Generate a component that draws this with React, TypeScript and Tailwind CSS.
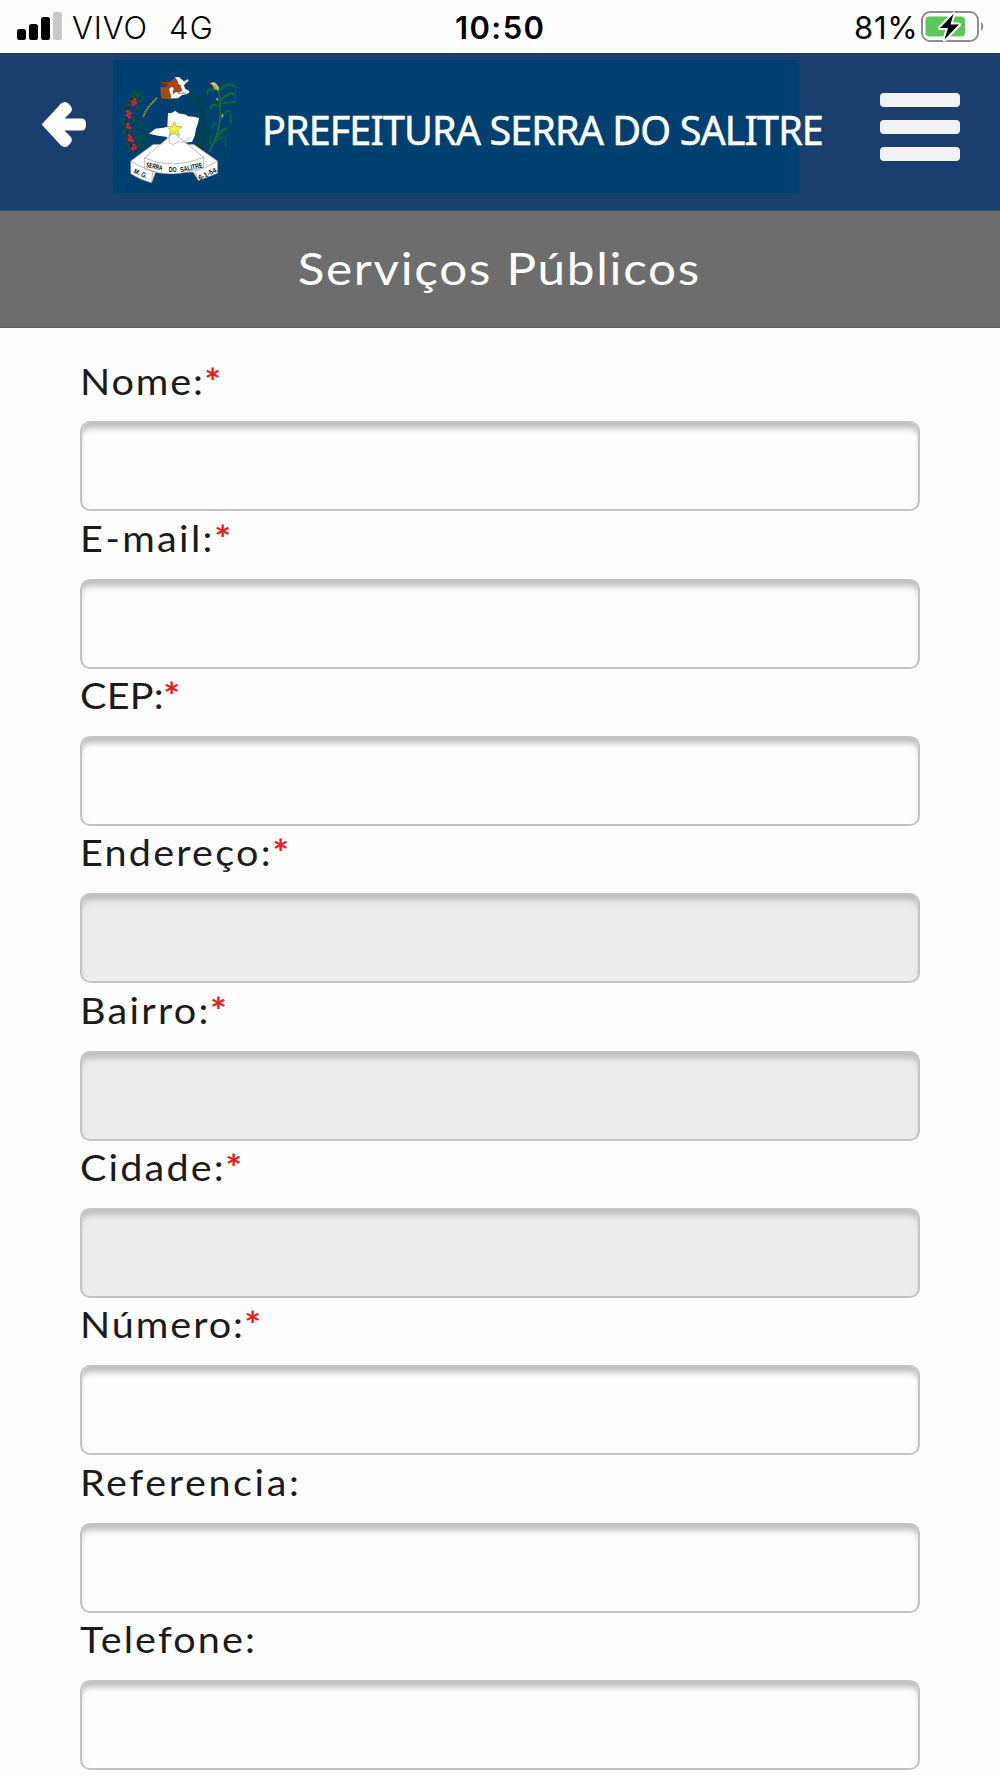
import type { ReactNode } from 'react';

interface Field {
  id: string;
  label: string;
  tracking: string;
  required?: boolean;
  disabled?: boolean;
}

const fields: Field[] = [
  { id: 'nome', label: 'Nome:', tracking: 'tracking-[1.7px]', required: true },
  { id: 'email', label: 'E-mail:', tracking: 'tracking-[2.1px]', required: true },
  { id: 'cep', label: 'CEP:', tracking: 'tracking-[0.2px]', required: true },
  { id: 'endereco', label: 'Endereço:', tracking: 'tracking-[2px]', required: true, disabled: true },
  { id: 'bairro', label: 'Bairro:', tracking: 'tracking-[2.05px]', required: true, disabled: true },
  { id: 'cidade', label: 'Cidade:', tracking: 'tracking-[1.95px]', required: true, disabled: true },
  { id: 'numero', label: 'Número:', tracking: 'tracking-[1.75px]', required: true },
  { id: 'referencia', label: 'Referencia:', tracking: 'tracking-[2.35px]' },
  { id: 'telefone', label: 'Telefone:', tracking: 'tracking-[1.9px]' },
];

function SignalIcon() {
  return (
    <svg className="h-[30px] w-[46px]" viewBox="0 0 46 30">
      <rect x="0" y="18" width="9" height="11" rx="2.5" />
      <rect x="12" y="13" width="9" height="16" rx="2.5" />
      <rect x="24" y="6" width="9" height="23" rx="2.5" />
      <rect x="36" y="1" width="9" height="28" rx="2.5" fill="#c8c8c8" />
    </svg>
  );
}

function BatteryIcon() {
  return (
    <svg className="h-[34px] w-[66px]" viewBox="0 0 66 34">
      <rect x="2" y="1" width="56" height="29" rx="8" fill="#fff" stroke="#8e8e90" strokeWidth="2" />
      <rect x="5.5" y="5.5" width="39.5" height="20" rx="4" fill="#5ac85a" />
      <path d="M61 11c3 1.500 3 7.500 0 9z" fill="#8e8e90" />
      <path
        d="M33.500 3 20 17h8l-3.500 11.500L39 13.500h-8.500z"
        fill="#000"
        stroke="#fff"
        strokeWidth="4"
        strokeLinejoin="round"
        paintOrder="stroke"
      />
    </svg>
  );
}

function StatusBar() {
  return (
    <div className="flex h-[53px] items-start pt-[11px] pl-[17px] font-['Inter',sans-serif] text-[31px] leading-[33px] text-black">
      <SignalIcon />
      <span className="ml-[9px] w-[97px] font-light tracking-[0.9px]">VIVO</span>
      <span className="w-[286px] font-light tracking-[1.2px]">4G</span>
      <span className="w-[399px] font-semibold tracking-[1.4px]">10:50</span>
      <span className="w-[66px] tracking-[0.7px]">81%</span>
      <BatteryIcon />
    </div>
  );
}

function Leaves({ points, fill }: { points: number[][]; fill: string }) {
  return (
    <g fill={fill}>
      {points.map(([x, y, angle, size]) => (
        <path
          key={`${x}-${y}-${angle}`}
          d="M0 0C4-5 12-5 17 0 11 4 5 4 0 0z"
          transform={`translate(${x} ${y}) rotate(${angle}) scale(${size})`}
        />
      ))}
    </g>
  );
}

// Coffee branch, wheat, map with star, corn stalk and ribbon
function CityEmblem() {
  return (
    <svg className="h-[133px] w-[137px] shrink-0" viewBox="9 0 411 399">
      <path d="M72 102Q40 160 50 215T84 272" fill="none" stroke="#07371f" strokeWidth="4" />
      <Leaves
        fill="#0b5a2c"
        points={[
          [74, 110, -90, 1.2], [76, 112, -35, 1.5], [72, 112, -145, 1.1], [68, 122, 185, 0.9], [80, 122, 10, 1.1],
          [62, 136, 200, 1], [78, 138, 40, 0.9], [54, 156, 205, 1], [50, 174, 160, 0.9], [62, 172, 20, 1],
          [48, 192, 200, 0.9], [60, 188, -10, 0.9], [50, 212, 165, 1.1], [66, 212, 25, 0.8], [54, 232, 170, 0.9],
          [70, 238, -30, 1], [58, 252, 150, 0.9], [70, 262, 130, 0.9], [80, 262, -40, 1], [84, 270, 100, 0.7],
        ]}
      />
      <g fill="#c92c36" stroke="#7d1820" strokeWidth="1">
        {[
          [74, 119], [69, 126], [76, 129], [70, 134], [54, 155], [60, 160], [52, 166], [58, 171], [54, 193],
          [52, 201], [59, 204], [57, 227], [62, 233], [58, 239], [66, 242], [72, 257], [76, 264], [69, 266],
        ].map(([x, y]) => (
          <circle key={`${x}-${y}`} cx={x} cy={y} r="5.500" />
        ))}
      </g>

      <path d="M132 118Q92 165 94 215T112 262" fill="none" stroke="#0a4a2a" strokeWidth="2" />
      <Leaves
        fill="#0a4f2e"
        points={[
          [98, 176, -60, 0.9], [94, 186, 200, 0.9], [98, 192, -20, 0.9], [93, 202, 170, 0.9], [96, 208, -40, 1],
          [94, 218, 190, 1], [98, 224, 10, 0.9], [96, 234, 160, 1], [102, 240, -50, 0.9], [100, 250, 150, 0.9],
          [106, 254, -20, 0.8], [108, 262, 120, 0.8], [92, 192, 110, 0.7], [98, 228, 100, 0.8],
        ]}
      />
      <path d="M141 113 128 128M130 126Q108 145 100 170" fill="none" stroke="#8b8b36" strokeWidth="6" strokeDasharray="5 2" />
      <path d="M140 114Q110 140 100 172" fill="none" stroke="#c6b544" strokeWidth="2" strokeDasharray="3 4" />

      <path d="M252 104Q282 150 282 205T262 262" fill="none" stroke="#073f25" strokeWidth="2.500" />
      <Leaves
        fill="#07482a"
        points={[
          [250, 108, -100, 0.9], [256, 114, 200, 0.8], [258, 118, -40, 1], [262, 128, 180, 0.9], [266, 132, -30, 1],
          [270, 142, 170, 1], [272, 148, -20, 1.1], [274, 158, 190, 0.8], [278, 166, -40, 1], [279, 176, 160, 1],
          [281, 184, -10, 0.9], [282, 196, 190, 1], [282, 204, 20, 1], [282, 214, 160, 1.2], [278, 226, -20, 1.1],
          [276, 234, 180, 1], [272, 244, 10, 1.1], [270, 252, 160, 1.1], [262, 262, -20, 1], [290, 210, 60, 1],
          [266, 226, 120, 0.8], [284, 234, 50, 0.9],
        ]}
      />

      <path d="M298 276Q330 218 331 160T322 82" fill="none" stroke="#24743a" strokeWidth="4" />
      <g fill="none" stroke="#0d6a34" strokeLinecap="round" strokeWidth="7">
        <path d="M323 90Q296 82 291 98" />
        <path d="M325 96Q348 62 375 80" />
        <path d="M330 122Q360 92 374 104" />
        <path d="M331 132Q352 126 376 126" strokeWidth="4" />
        <path d="M330 140Q306 126 302 145" />
        <path d="M332 180Q350 144 360 155L363 188" strokeWidth="4" />
        <path d="M329 200Q308 180 307 205" strokeWidth="4" />
        <path d="M320 232Q340 204 350 205" />
        <path d="M313 248Q335 224 347 236V257" strokeWidth="4" />
        <path d="M306 260Q297 240 303 225" strokeWidth="4" />
      </g>
      <path d="M374 82 380 98M376 104V134M292 98V110M363 165V192" stroke="#255f42" strokeWidth="2" />
      <path d="M304 68 320 74 325 91 313 88zM322 110 326 122 318 120zM336 160 342 168 334 174z" fill="#b2a640" />
      <path d="m299 70 13-4 10 8-8 5zM317 70l10 12-2 12-8-15z" fill="#d4c265" />

      {/* cow head: brown hide first, then the white blaze and muzzle */}
      <path
        d="M151 82 166 81 160 72 152 66 164 65 178 67 190 57 204 54 214 58 212 70 226 96 218 104 196 116H156L153 108z"
        fill="#a24c1d"
      />
      <path d="M152 66 168 67 178 74 168 80 158 74z" fill="#7f3515" />
      <path
        d="M194 52 207 51 217 60 222 64 233 58 236 62 227 70 222 76 225 86 237 92 238 98 228 103 216 105 204 115H182L184 106 179 97 178 87 184 81 191 84 188 96 190 103 198 96 206 98 217 92 212 78 205 70 202 60z"
        fill="#fff"
      />
      <path d="m221 66 10-6-4 8z" fill="#d99a86" />
      <path d="M204 101 216 99 228 99M209 75l4 3" fill="none" stroke="#5b4034" strokeWidth="2" />

      <path
        d="M117 221 136 206 160 203 172 200 174 160 187 158 195 152 206 160 229 164 233 169 251 170 267 174 264 190 258 206 254 228 246 246 218 248 190 254 168 230 144 227z"
        fill="#fff"
      />
      <g fill="#fff" stroke="#777" strokeWidth="1.500" strokeLinejoin="round">
        <path d="M130 253 62 303V341Q88 358 125 369L137 337 250 337 265 362 323 340V303L251 253z" />
        <path d="M191 219 103 294V327Q190 360 281 321V292z" />
        <path d="M103 294Q190 331 281 292M62 303Q90 321 128 333L125 369M323 303Q293 323 256 333L265 362M128 333 137 337" fill="none" />
      </g>
      <path d="m177 230 1 16 10 8 17-9 12 2 13-6 12-10" fill="none" stroke="#777" strokeWidth="1.500" />
      <path d="m193 185 6 14 17 1-13 11 5 16-15-10-16 10 6-16-12-11 16-1z" fill="#ffee32" stroke="#847b2d" strokeWidth="1.500" />
      <g className="font-['Liberation_Sans',sans-serif] font-bold" fill="#111" fontSize="21">
        <text transform="translate(107 321) rotate(12)" textLength="50" lengthAdjust="spacingAndGlyphs">SERRA</text>
        <text transform="translate(176 336)" textLength="24" lengthAdjust="spacingAndGlyphs">DO</text>
        <text transform="translate(212 337) rotate(-13)" textLength="69" lengthAdjust="spacingAndGlyphs">SALITRE</text>
        <text transform="translate(70 338) rotate(24)" textLength="42" lengthAdjust="spacingAndGlyphs">M. G.</text>
        <text transform="translate(269 361) rotate(-26)" textLength="58" lengthAdjust="spacingAndGlyphs">6-1-54</text>
      </g>
    </svg>
  );
}

function Header() {
  return (
    <header className="flex h-[158px] items-start border-t border-b border-t-[#173457] border-b-[#35516f] bg-[#1a3e6e]">
      <button type="button" aria-label="Voltar" className="ml-[41px] mt-[46px] w-[72px]">
        <svg className="h-[49px] w-[46px]" viewBox="0 0 46 49" fill="#fff">
          <path d="M2.500 22.500 20 3.500Q24 .5 27.500 3.500L30 6.500Q32 9.500 29.500 12.500L23.500 18.500H41Q45 18.500 45 24.500T41 30.500H23.500L29.500 36.500Q32 39.500 30 42.500L27.500 45.500Q24 48.500 20 45.500L2.500 26.500Q-.5 24.500 2.500 22.500z" />
        </svg>
      </button>
      <div className="mt-[6px] flex h-[133px] w-[686px] shrink-0 items-start bg-[#004071]">
        <CityEmblem />
        <h1 className="ml-[12px] mt-[43px] whitespace-nowrap font-['Noto_Sans',sans-serif] text-[39.500px] leading-[55px] tracking-[-0.890px] text-white [-webkit-text-stroke:0.5px_#fff]">
          PREFEITURA SERRA DO SALITRE
        </h1>
      </div>
      <button type="button" aria-label="Menu" className="ml-[81px] mt-[39px] flex flex-col gap-[13px]">
        <span className="h-[14px] w-[80px] rounded-[4px] bg-[#f3f2f3]" />
        <span className="h-[14px] w-[80px] rounded-[4px] bg-[#f3f2f3]" />
        <span className="h-[14px] w-[80px] rounded-[4px] bg-[#f3f2f3]" />
      </button>
    </header>
  );
}

function FormField({ field, children }: { field: Field; children?: ReactNode }) {
  return (
    <div className="flex h-[157.330px] flex-col">
      <label
        htmlFor={field.id}
        className="flex h-[67.330px] origin-left scale-x-110 items-start pt-[4.500px] text-[36px] leading-[44px] text-[#1b1b1b]"
      >
        <span className={field.tracking}>{field.label}</span>
        {children}
      </label>
      <input
        id={field.id}
        disabled={field.disabled}
        className="h-[90px] w-full rounded-[10px] border-2 border-[#c3c3c3] bg-[#fefefe] px-4 shadow-[inset_0_7px_6px_-2px_#bcbcbc] outline-none disabled:bg-[#ededed]"
      />
    </div>
  );
}

export default function App() {
  return (
    <div className="h-[1778px] w-[1000px] overflow-hidden bg-[#fefefe] font-['Lato',sans-serif]">
      <StatusBar />
      <Header />
      <h2 className="flex h-[117px] justify-center border-b border-[#606060] bg-[#6d6d6d] pt-[28px] pr-[2px] text-[45px] leading-[58px] tracking-[1.520px] text-white">
        <span className="scale-x-110">Serviços Públicos</span>
      </h2>
      <form className="mx-[80px] pt-[26px]">
        {fields.map((field) => (
          <FormField key={field.id} field={field}>
            {field.required && <span className="-ml-[0.5px] font-bold text-[#e3211c]">*</span>}
          </FormField>
        ))}
      </form>
    </div>
  );
}
